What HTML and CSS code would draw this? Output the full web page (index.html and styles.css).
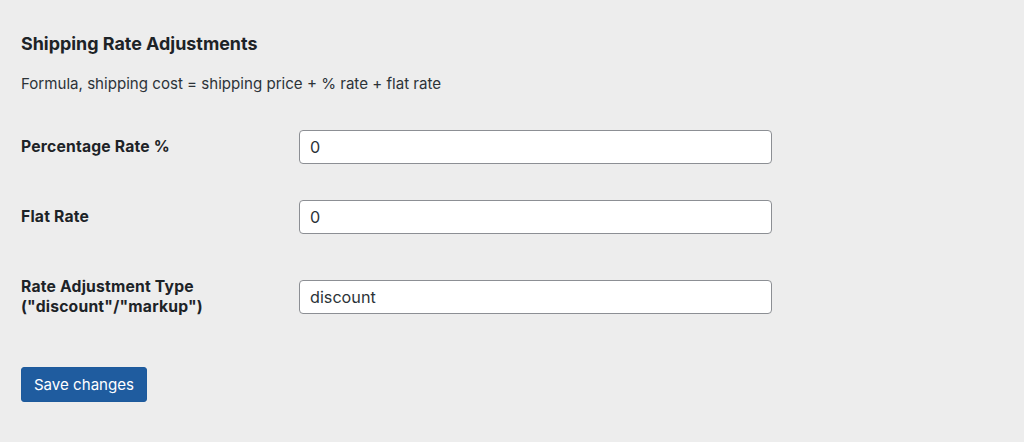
FILE: index.html
```html
<!DOCTYPE html>
<html lang="en">
<head>
<meta charset="utf-8">
<title>Shipping Rate Adjustments</title>
<link rel="stylesheet" href="styles.css">
</head>
<body>
<div class="wrap">
  <h2 class="title">Shipping Rate Adjustments</h2>
  <p class="desc">Formula, shipping cost = shipping price + % rate + flat rate</p>
  <form class="form-table">
    <div class="row">
      <label class="th" for="pct">Percentage Rate %</label>
      <div class="td"><input id="pct" class="regular-text" type="text" value="0"></div>
    </div>
    <div class="row">
      <label class="th" for="flat">Flat Rate</label>
      <div class="td"><input id="flat" class="regular-text" type="text" value="0"></div>
    </div>
    <div class="row">
      <label class="th" for="type">Rate Adjustment Type<br>("discount"/"markup")</label>
      <div class="td"><input id="type" class="regular-text" type="text" value="discount"></div>
    </div>
    <div class="submit">
      <button type="button" class="button-primary">Save changes</button>
    </div>
  </form>
</div>
</body>
</html>
```
FILE: styles.css
```css
html, body {
  margin: 0;
  padding: 0;
  background: #ededed;
}
body {
  font-family: Inter, "Noto Sans", sans-serif;
  color: #1d2327;
  font-size: 15.1px;
}
.wrap {
  padding: 0 21px;
}
.title {
  font-size: 17.9px;
  font-weight: 700;
  line-height: 24px;
  margin: 32px 0 0;
}
.desc {
  margin: 18px 0 0;
  line-height: 20px;
  color: #2c3338;
}
.form-table {
  margin-top: 18px;
}
.row {
  display: flex;
  align-items: center;
}
.th {
  width: 278px;
  flex: none;
  padding: 25px 0;
  font-size: 15.7px;
  font-weight: 700;
  letter-spacing: 0.2px;
  line-height: 20px;
}
.td {
  padding: 15px 0;
}
.regular-text {
  display: block;
  box-sizing: border-box;
  width: 473px;
  height: 34px;
  margin: 0;
  padding: 0 10px;
  border: 1px solid #8c8f94;
  border-radius: 4px;
  background: #fff;
  font-family: inherit;
  font-size: 16.2px;
  color: #2c3338;
  outline: none;
}
.submit {
  padding-top: 25px;
}
.button-primary {
  width: 126px;
  height: 35px;
  padding: 0;
  border: 1px solid #1d5a9c;
  border-radius: 3px;
  background: #1f5c9f;
  color: #fff;
  font-family: inherit;
  font-size: 15.1px;
  cursor: pointer;
}
```
